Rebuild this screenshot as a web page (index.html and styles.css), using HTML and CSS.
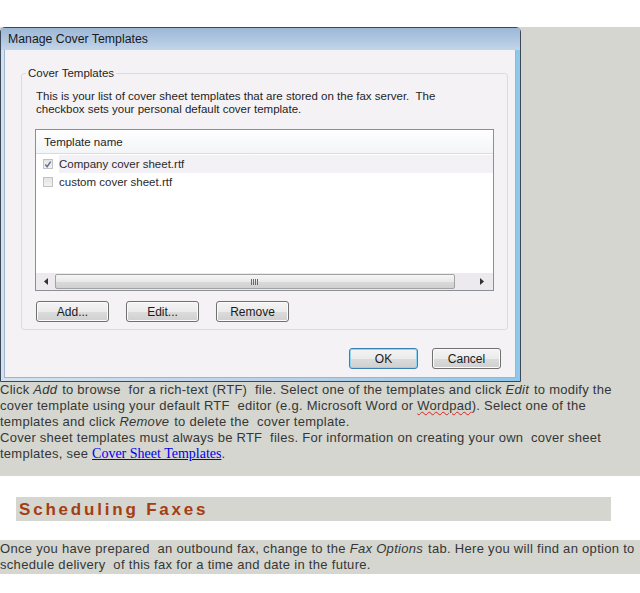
FILE: index.html
```html
<!DOCTYPE html>
<html>
<head>
<meta charset="utf-8">
<link rel="stylesheet" href="styles.css">
</head>
<body>
<div class="top"></div>
<section class="gray">
  <div class="dialog">
    <div class="titlebar">Manage Cover Templates</div>
    <div class="client">
      <fieldset class="group">
        <legend>Cover Templates</legend>
        <p class="desc">This is your list of cover sheet templates that are stored on the fax server.&nbsp; The<br>checkbox sets your personal default cover template.</p>
        <div class="list">
          <div class="list-head">Template name</div>
          <div class="rows">
            <div class="row"><span class="cb"><svg width="9" height="9" viewBox="0 0 9 9"><path d="M1.5 4.5 L3.5 7 L7.5 1.2" fill="none" stroke="#5b6f98" stroke-width="1.6"/></svg></span><span class="name sel">Company cover sheet.rtf</span></div>
            <div class="row"><span class="cb"></span><span class="name">custom cover sheet.rtf</span></div>
          </div>
          <div class="hscroll">
            <span class="sbtn left"><svg width="4" height="7" viewBox="0 0 4 7"><path d="M4 0 L0 3.5 L4 7 Z" fill="#333"/></svg></span>
            <span class="thumb"><svg width="8" height="6" viewBox="0 0 8 6"><path d="M0.5 0V6M2.5 0V6M4.5 0V6M6.5 0V6" stroke="#6a6a6a" stroke-width="1"/></svg></span>
            <span class="track"></span>
            <span class="sbtn right"><svg width="4" height="7" viewBox="0 0 4 7"><path d="M0 0 L4 3.5 L0 7 Z" fill="#333"/></svg></span>
          </div>
        </div>
        <div class="btnrow">
          <button class="btn">Add...</button>
          <button class="btn">Edit...</button>
          <button class="btn">Remove</button>
        </div>
      </fieldset>
      <div class="footer">
        <button class="btn ok">OK</button>
        <button class="btn">Cancel</button>
      </div>
    </div>
  </div>
  <div class="text">
    <p>Click <i class="em">Add</i> to browse&nbsp; for a rich-text (RTF)&nbsp; file. Select one of the templates and click <i class="em">Edit</i> to modify the cover template using your default RTF&nbsp; editor (e.g. Microsoft Word or <span class="spell">Wordpad</span>). Select one of the templates and click <i class="em">Remove</i> to delete the&nbsp; cover template.</p>
    <p>Cover sheet templates must always be RTF&nbsp; files. For information on creating your own&nbsp; cover sheet templates, see <a class="link" href="#">Cover Sheet Templates</a>.</p>
  </div>
</section>
<h2 class="heading">Scheduling Faxes</h2>
<p class="para">Once you have prepared&nbsp; an outbound fax, change to the <i class="em">Fax Options</i> tab. Here you will find an option to schedule delivery&nbsp; of this fax for a time and date in the future.</p>
</body>
</html>
```
FILE: styles.css
```css
html, body { margin: 0; padding: 0; background: #ffffff; }
body { font-family: "Liberation Sans", Arial, sans-serif; width: 640px; overflow: hidden; }

.top { height: 27px; }

.gray { background: #d4d6cf; padding-bottom: 14px; }

.dialog {
  width: 521px; height: 355px; box-sizing: border-box;
  border: 1px solid #3a4858; border-radius: 5px 5px 0 0;
  background: linear-gradient(90deg, #d4e2ef 0%, #b7d0e8 60%, #8ec8ea 100%);
  padding: 0 3px 3px 3px;
  display: flex; flex-direction: column;
}
.titlebar {
  height: 22px; line-height: 23px;
  font-size: 12.3px; color: #1a1a1a;
  background: linear-gradient(#9cb7d6, #c2d5ea);
  margin: 0 -3px; padding-left: 7px;
}
.client {
  flex: 1; background: #f5f2f6;
  padding: 17px 14px 0 16px;
  border: 1px solid #9fb4cc; border-top: none;
  margin-right: 1px;
  font-size: 11.5px; color: #1e1e1e;
}

.group {
  width: 487px; box-sizing: border-box; margin: 0;
  border: 1px solid #d7dde4; border-radius: 3px;
  padding: 0 13px 7px;
}
.group legend { padding: 0 2px; margin-left: -9px; line-height: 13px; font-size: 11.5px; color: #1e1e1e; }

.desc { margin: 10px 0 0 1px; line-height: 13px; }

.list {
  margin-top: 13px; height: 162px; box-sizing: border-box;
  border: 1px solid #8c9096; background: #fff;
  display: flex; flex-direction: column;
}
.list-head {
  height: 23px; line-height: 24px; padding-left: 8px;
  background: linear-gradient(#ffffff, #f3f4f6);
  border-bottom: 1px solid #dcdcdc;
}
.rows { flex: 1; padding-top: 1px; }
.row { height: 18px; display: flex; align-items: center; padding-left: 7px; }
.cb {
  width: 8px; height: 8px; border: 1px solid #c2c2c2;
  background: linear-gradient(#e4e4e4, #f2f2f2);
  display: flex; align-items: center; justify-content: center;
  margin-right: 6px;
}
.name { flex: 1; line-height: 18px; color: #2a2a2a; }
.name.sel { background: #f3f1f6; }

.hscroll { height: 17px; display: flex; background: #eceaee; }
.sbtn { display: flex; align-items: center; justify-content: center; }
.sbtn.left { width: 19px; }
.sbtn.right { width: 22px; }
.thumb {
  width: 400px; margin: 1px 0; box-sizing: border-box;
  border: 1px solid #a2a2a2; border-radius: 2px;
  background: linear-gradient(#f6f6f6 0%, #e9e9e9 50%, #dadada 51%, #d0d0d0 100%);
  display: flex; align-items: center; justify-content: center;
}
.track { flex: 1; }

.btnrow { display: flex; gap: 17px; margin-top: 10px; padding-left: 1px; }
.btn {
  font-family: "Liberation Sans", Arial, sans-serif; font-size: 12px; color: #1a1a1a;
  width: 73px; height: 21px; padding: 0;
  border: 1px solid #707070; border-radius: 3px;
  background: linear-gradient(#f4f4f4 0%, #ebebeb 50%, #dcdcdc 51%, #cfcfcf 100%);
  box-shadow: inset 0 0 0 1px #fbfbfb;
}

.footer { display: flex; justify-content: flex-end; gap: 14px; margin-top: 18px; }
.footer .btn { width: 69px; }
.btn.ok { border-color: #3c7fb1; box-shadow: inset 0 0 0 1px #8fd6f6; }

.text { width: 616px; font-size: 13px; letter-spacing: 0.26px; color: #363636; line-height: 16px; }
.text p { margin: 0; }
.em { padding-right: 1px; }
.spell { text-decoration: underline wavy #e02020; text-decoration-thickness: 1px; }
.link { font-family: "Liberation Serif", "Times New Roman", serif; font-size: 14px; letter-spacing: 0; color: #0000ee; text-decoration: underline; }

.heading {
  margin: 21px 0 0 16px; width: 595px; height: 24px; box-sizing: border-box;
  background: #d4d6cf; padding-left: 3px;
  font-size: 17px; line-height: 26px; font-weight: bold; letter-spacing: 2.8px;
  color: #a53d13;
}
.para {
  margin: 19px 0 0; background: #d4d6cf; padding: 1px 0 1px;
  font-size: 13px; letter-spacing: 0.3px; line-height: 16px; color: #363636;
}
```
